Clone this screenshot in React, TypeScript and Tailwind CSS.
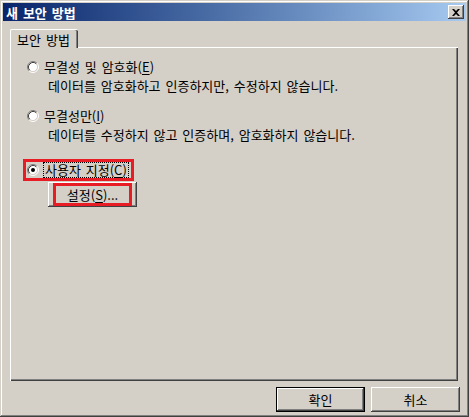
import React from "react";

const font = { fontFamily: '"Noto Sans CJK KR", "Noto Sans", sans-serif' };

// classic 3D bevels
const raised =
  "shadow-[inset_-1px_-1px_#404040,inset_1px_1px_#ffffff,inset_-2px_-2px_#808080,inset_2px_2px_#d4d0c8]";

const Radio = ({ checked = false }: { checked?: boolean }) => (
  <svg width="12" height="12" viewBox="0 0 12 12" className="shrink-0">
    <circle cx="6" cy="6" r="4.5" fill="#ffffff" />
    <path d="M2.11 9.89 A5.5 5.5 0 0 1 9.89 2.11" fill="none" stroke="#808080" />
    <path d="M9.89 2.11 A5.5 5.5 0 0 1 2.11 9.89" fill="none" stroke="#ffffff" />
    <path d="M2.82 9.18 A4.5 4.5 0 0 1 9.18 2.82" fill="none" stroke="#404040" />
    <path d="M9.18 2.82 A4.5 4.5 0 0 1 2.82 9.18" fill="none" stroke="#d4d0c8" />
    {checked && <circle cx="6" cy="6" r="2" fill="#000000" />}
  </svg>
);

const U = ({ children }: { children: React.ReactNode }) => <span className="underline underline-offset-2">{children}</span>;

export default function App() {
  return (
    <div
      style={font}
      className="w-[469px] h-[417px] bg-[#d4d0c8] p-[3px] text-[13px] [word-spacing:2px] text-black flex flex-col shadow-[inset_-1px_-1px_#404040,inset_1px_1px_#d4d0c8,inset_-2px_-2px_#808080,inset_2px_2px_#ffffff]"
    >
      {/* Title bar */}
      <div className="h-[18px] bg-linear-to-r from-[#0a246a] to-[#a6caf0] flex items-center pl-[3px] pr-[2px]">
        <span className="text-white font-bold text-[13px] leading-none flex-1">새 보안 방법</span>
        <button className={`w-[16px] h-[14px] bg-[#d4d0c8] flex items-center justify-center ${raised}`}>
          <svg width="8" height="7" viewBox="0 0 8 7">
            <path d="M0 0h2l2 2 2-2h2L5 3.5 8 7H6L4 5 2 7H0l3-3.5z" fill="#000" />
          </svg>
        </button>
      </div>

      {/* Body */}
      <div className="flex-1 flex flex-col pl-[7px] pr-[8px] pt-[8px]">
        {/* Tab strip */}
        <div className="flex">
          <div className="relative z-10 -mb-[1px] w-[68px] h-[19px] bg-[#d4d0c8] border-l border-t border-white rounded-tl-[2px] rounded-tr-[2px] shadow-[inset_-1px_0_#404040,inset_-2px_0_#808080] flex items-center justify-center pr-[2px]">
            <span className="leading-none">보안 방법</span>
          </div>
        </div>

        {/* Panel */}
        <div className="h-[334px] shadow-[inset_1px_1px_#ffffff,inset_-1px_-1px_#404040,inset_-2px_-2px_#808080] pt-[12px] pl-[17px] flex flex-col">
          <div className="flex items-center h-[16px] gap-[5px]">
            <Radio />
            <span className="leading-[16px]">
              무결성 및 암호화(<U>E</U>)
            </span>
          </div>
          <div className="ml-[21px] mt-[3px] h-[16px] leading-[16px]">
            데이터를 암호화하고 인증하지만, 수정하지 않습니다.
          </div>

          <div className="flex items-center h-[16px] gap-[5px] mt-[14px]">
            <Radio />
            <span className="leading-[16px]">
              무결성만(<U>I</U>)
            </span>
          </div>
          <div className="ml-[21px] mt-[3px] h-[16px] leading-[16px]">
            데이터를 수정하지 않고 인증하며, 암호화하지 않습니다.
          </div>

          <div className="mt-[16px] -ml-[4px] self-start border-[3px] border-[#e81c24] h-[22px] pl-[1px] pr-[2px] flex items-center gap-[4px]">
            <Radio checked />
            <span className="border border-dotted border-black leading-[14px] px-[1px]">
              사용자 지정(<U>C</U>)
            </span>
          </div>

          <button
            className={`relative mt-[1px] ml-[21px] w-[89px] h-[25px] bg-[#d4d0c8] flex items-center justify-center ${raised}`}
          >
            <span className="absolute top-[1px] bottom-[1px] left-[5px] right-[5px] border-[3px] border-[#e81c24]" />
            <span className="leading-none">
              설정(<U>S</U>)...
            </span>
          </button>
        </div>

        {/* Dialog buttons */}
        <div className="flex justify-end gap-[6px] mt-[6px]">
          <button className="w-[89px] h-[25px] border border-black bg-[#d4d0c8] flex items-center justify-center shadow-[inset_-1px_-1px_#404040,inset_1px_1px_#ffffff,inset_-2px_-2px_#808080]">
            <span className="leading-none">확인</span>
          </button>
          <button className={`w-[89px] h-[25px] bg-[#d4d0c8] flex items-center justify-center -mr-[2px] ${raised}`}>
            <span className="leading-none">취소</span>
          </button>
        </div>
      </div>
    </div>
  );
}
